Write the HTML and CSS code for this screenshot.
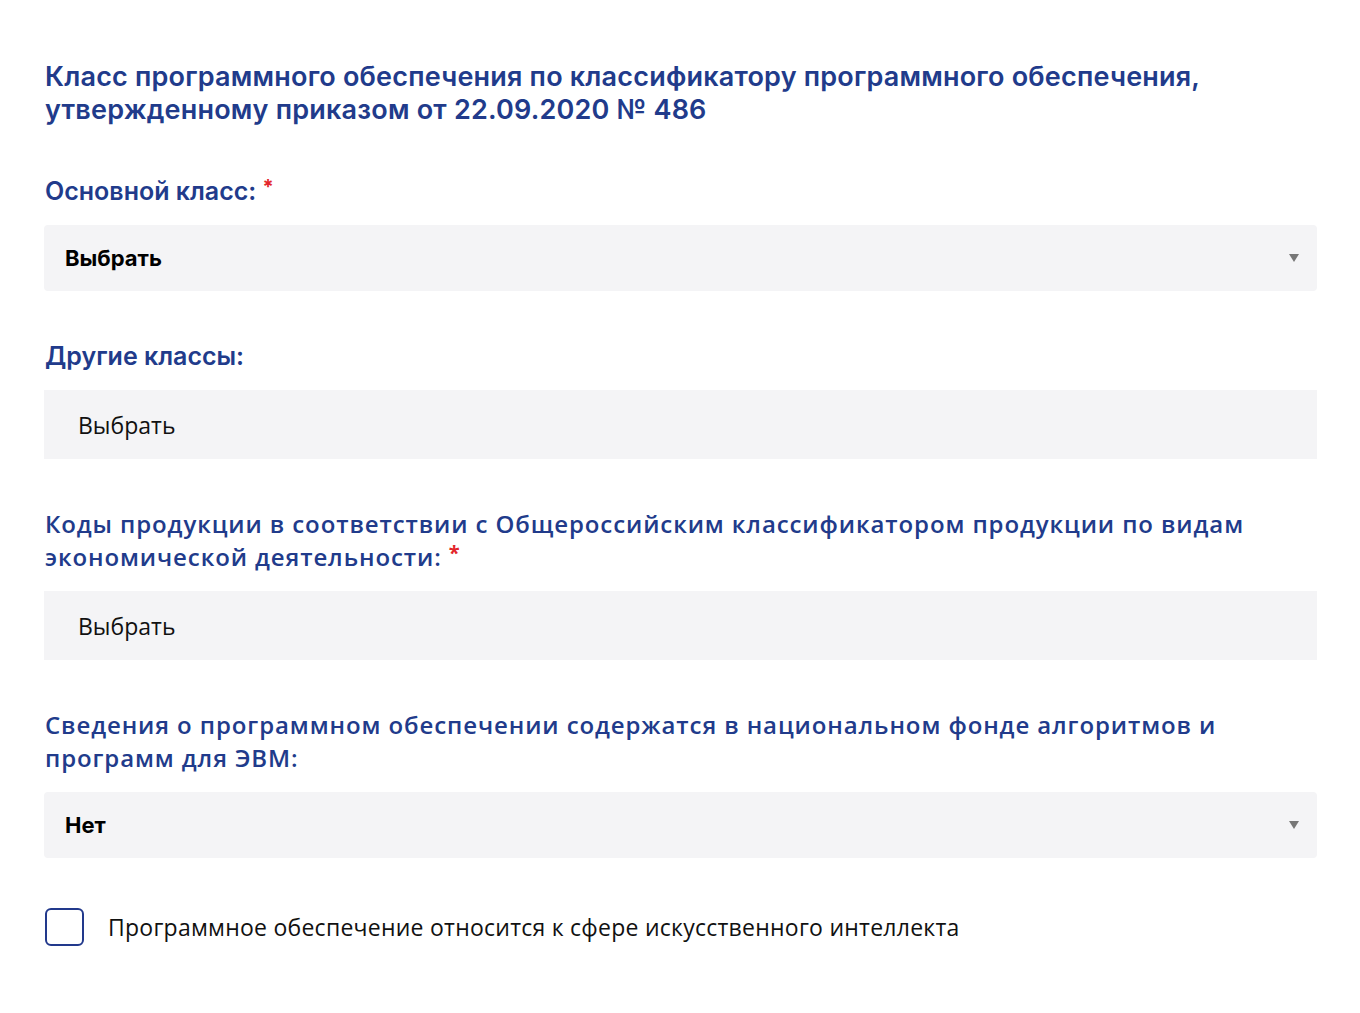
FILE: index.html
```html
<!DOCTYPE html>
<html lang="ru">
<head>
<meta charset="utf-8">
<title>Форма</title>
<link rel="stylesheet" href="styles.css">
</head>
<body>
<main class="form">
  <h2 class="title">Класс программного обеспечения по классификатору программного обеспечения,<br>утвержденному приказом от 22.09.2020 № 486</h2>

  <section class="field field-first">
    <div class="label label-narrow">Основной класс: <span class="req">*</span></div>
    <div class="select">
      <span class="select-value">Выбрать</span>
      <span class="arrow"></span>
    </div>
  </section>

  <section class="field">
    <div class="label label-narrow">Другие классы:</div>
    <div class="multi">
      <span class="multi-value">Выбрать</span>
    </div>
  </section>

  <section class="field field-wide">
    <div class="label label-wide">Коды продукции в соответствии с Общероссийским классификатором продукции по видам<br>экономической деятельности: <span class="req">*</span></div>
    <div class="multi">
      <span class="multi-value">Выбрать</span>
    </div>
  </section>

  <section class="field field-wide">
    <div class="label label-wide">Сведения о программном обеспечении содержатся в национальном фонде алгоритмов и<br>программ для ЭВМ:</div>
    <div class="select">
      <span class="select-value">Нет</span>
      <span class="arrow"></span>
    </div>
  </section>

  <label class="check">
    <span class="box"></span>
    <span class="check-text">Программное обеспечение относится к сфере искусственного интеллекта</span>
  </label>
</main>
</body>
</html>
```

FILE: styles.css
```css
* { box-sizing: border-box; }
html, body { margin: 0; padding: 0; background: #fff; }
body { font-family: Inter, "Liberation Sans", sans-serif; }

.form {
  width: 1273px;
  margin-left: 44px;
  padding-top: 60px;
}

.title {
  margin: 0;
  font-family: Inter, "Liberation Sans", sans-serif;
  font-weight: 600;
  font-size: 27px;
  line-height: 33px;
  letter-spacing: 0.2px;
  color: #213b8b;
  padding-left: 1px;
}

.field { margin-top: 49px; }
.field-first { margin-top: 49px; }
.field-wide { margin-top: 48px; }

.label {
  color: #213b8b;
  font-size: 25px;
  line-height: 33px;
  padding-left: 1px;
  margin-bottom: 17px;
}
.label-narrow {
  font-family: Inter, "Liberation Sans", sans-serif;
  font-weight: 600;
}
.label-wide {
  font-family: "Open Sans", Inter, sans-serif;
  font-weight: 600;
  font-size: 24px;
  letter-spacing: 0.9px;
  margin-bottom: 18px;
}
.req {
  color: #e3262b;
  font-size: 20px;
  font-weight: 700;
  line-height: 0;
  vertical-align: 6px;
}

.select {
  height: 66px;
  background: #f4f4f6;
  border-radius: 4px;
  display: flex;
  align-items: center;
  justify-content: space-between;
  padding: 0 18px 0 21px;
}
.select-value {
  font-family: Inter, "Liberation Sans", sans-serif;
  font-weight: 700;
  font-size: 22px;
  color: #000;
}
.arrow {
  width: 0; height: 0;
  border-left: 5px solid transparent;
  border-right: 5px solid transparent;
  border-top: 8px solid #777;
}

.multi {
  height: 69px;
  background: #f4f4f6;
  display: flex;
  align-items: center;
  padding-left: 34px;
}
.multi-value {
  font-family: "Open Sans", Inter, sans-serif;
  font-size: 23px;
  color: #111;
}

.check {
  display: flex;
  align-items: center;
  margin-top: 50px;
  padding-left: 1px;
}
.box {
  width: 39px; height: 38px;
  border: 2px solid #22398c;
  border-radius: 6px;
  margin-right: 24px;
}
.check-text {
  font-family: "Open Sans", Inter, sans-serif;
  font-size: 23px;
  letter-spacing: 0.25px;
  color: #111;
}
```
